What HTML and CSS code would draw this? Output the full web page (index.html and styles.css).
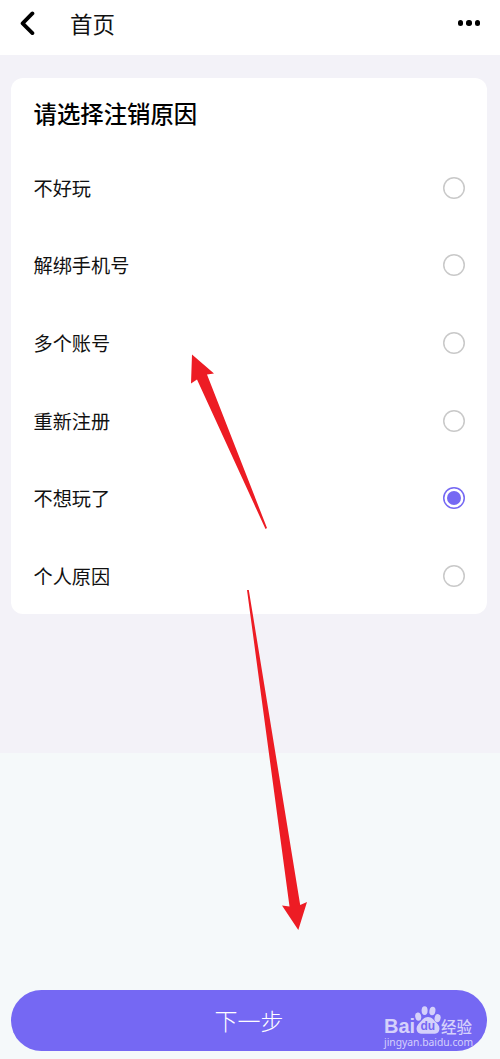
FILE: index.html
```
<!DOCTYPE html>
<html lang="zh-CN">
<head>
    <meta charset="UTF-8">
    <meta name="viewport" content="width=device-width, initial-scale=1.0">
    <title>首页</title>
    <link rel="stylesheet" href="styles.css">
</head>
<body>
    <header class="navbar">
        <svg class="back" width="16" height="26" viewBox="0 0 16 26">
            <path d="M12.4 3.4 L2.6 13.3 L12.4 23.1" />
        </svg>
        <h1 class="nav-title">首页</h1>
        <div class="more">
            <span></span>
            <span></span>
            <span></span>
        </div>
    </header>

    <main class="content">
        <form class="card">
            <h2 class="card-title">请选择注销原因</h2>
            <label class="reason">不好玩<input type="radio" name="reason"></label>
            <label class="reason">解绑手机号<input type="radio" name="reason"></label>
            <label class="reason">多个账号<input type="radio" name="reason"></label>
            <label class="reason">重新注册<input type="radio" name="reason"></label>
            <label class="reason">不想玩了<input type="radio" name="reason" checked></label>
            <label class="reason">个人原因<input type="radio" name="reason"></label>
        </form>
    </main>

    <footer class="bottom">
        <button type="button" class="next">下一步</button>
    </footer>

    <!-- red arrows over the page -->
    <svg class="arrows" width="500" height="1059" viewBox="0 0 500 1059">
        <path d="M192 354.5 L214 373.5 L207 374.5 L267 528 L265.5 529 L197 379.5 L191 383.5 Z" />
        <path d="M247 590 L248.8 590 L300.2 905 L307 902 L298.3 930 L282 905.5 L289.5 906.5 Z" />
    </svg>

    <div class="watermark">
        <div class="brand">
            <span class="bai">Bai</span>
            <span class="paw">
                <svg width="27" height="29" viewBox="0 0 27 29">
                    <ellipse cx="3.2" cy="10.6" rx="3" ry="4.2" transform="rotate(-10 3.2 10.6)" />
                    <ellipse cx="9.6" cy="4.6" rx="3" ry="4.4" />
                    <ellipse cx="17.4" cy="5" rx="3" ry="4.3" transform="rotate(10 17.4 5)" />
                    <ellipse cx="22.6" cy="12.2" rx="3" ry="4.1" transform="rotate(12 22.6 12.2)" />
                    <path d="M13 11 C17 11 18.5 14 21 16.3 C24.2 19.3 25.2 22 24 25 C22.5 28.6 18.5 27.7 13 27.7 C7.5 27.7 3.5 28.6 2 25 C0.8 22 2 19.3 5 16.3 C7.5 14 9 11 13 11 Z" />
                </svg>
                <span class="du">du</span>
            </span>
            <span class="jingyan">经验</span>
        </div>
        <div class="site">jingyan.baidu.com</div>
    </div>
</body>
</html>
```
FILE: styles.css
```
* {
    box-sizing: border-box;
}
body {
    margin: 0;
    min-height: 1059px;
    display: flex;
    flex-direction: column;
    position: relative;
    background-color: #f5f9fa;
    color: #111;
    font-family: "Noto Sans CJK SC", sans-serif;
}
.navbar {
    height: 55px;
    padding: 0 20px 9px 20px;
    display: flex;
    align-items: center;
    background-color: #fff;
}
.back {
    fill: none;
    stroke: #000;
    stroke-width: 3.8;
    stroke-linecap: round;
    stroke-linejoin: round;
}
.nav-title {
    margin: 0 0 0 34px;
    font-size: 22.5px;
    font-weight: 400;
    line-height: 30px;
}
.more {
    display: flex;
    gap: 3px;
    margin-left: auto;
}
.more span {
    width: 5.4px;
    height: 5.4px;
    border-radius: 50%;
    background-color: #000;
}
.content {
    height: 698px;
    padding: 23px 13px 0 11px;
    background-color: #f3f2f8;
}
.card {
    height: 536px;
    padding: 0 22px 0 22.5px;
    border-radius: 12px;
    background-color: #fff;
}
.card-title {
    margin: 0;
    height: 71px;
    line-height: 71px;
    font-size: 23.4px;
    font-weight: 500;
    color: #000;
}
.reason {
    height: 77.6px;
    display: flex;
    align-items: center;
    justify-content: space-between;
    font-size: 19.2px;
}
.reason input {
    appearance: none;
    width: 22px;
    height: 22px;
    margin: 0;
    padding: 4px;
    border-radius: 50%;
    box-shadow: inset 0 0 0 1.5px #c9c9c9;
}
.reason input:checked {
    box-shadow: inset 0 0 0 1.5px #7568f3;
    background: #7568f3 content-box;
}
.bottom {
    margin-top: auto;
    padding: 0 13px 8.5px 11px;
}
.next {
    display: block;
    width: 100%;
    height: 60.5px;
    padding: 0;
    border: 0;
    border-radius: 31px;
    background-color: #7568f3;
    color: #fff;
    font-family: inherit;
    font-size: 23px;
    font-weight: 300;
}
.arrows {
    position: absolute;
    top: 0;
    left: 0;
    fill: #ed1c24;
    pointer-events: none;
}
.watermark {
    position: absolute;
    left: 384px;
    top: 1006px;
    color: #d5d1fb;
}
.brand {
    display: flex;
    align-items: flex-end;
    height: 29px;
}
.bai {
    width: 31px;
    font: bold 20px/18px "Liberation Sans", sans-serif;
}
.paw {
    position: relative;
    width: 26px;
    height: 29px;
    fill: #d5d1fb;
}
.du {
    position: absolute;
    left: 5.5px;
    top: 13px;
    color: #7568f3;
    font: bold 12px/14px "Liberation Sans", sans-serif;
}
.jingyan {
    font-size: 15.5px;
    font-weight: 500;
    line-height: 18px;
}
.site {
    margin-top: 1px;
    font: 10.3px/12px "Noto Sans", sans-serif;
}
```
